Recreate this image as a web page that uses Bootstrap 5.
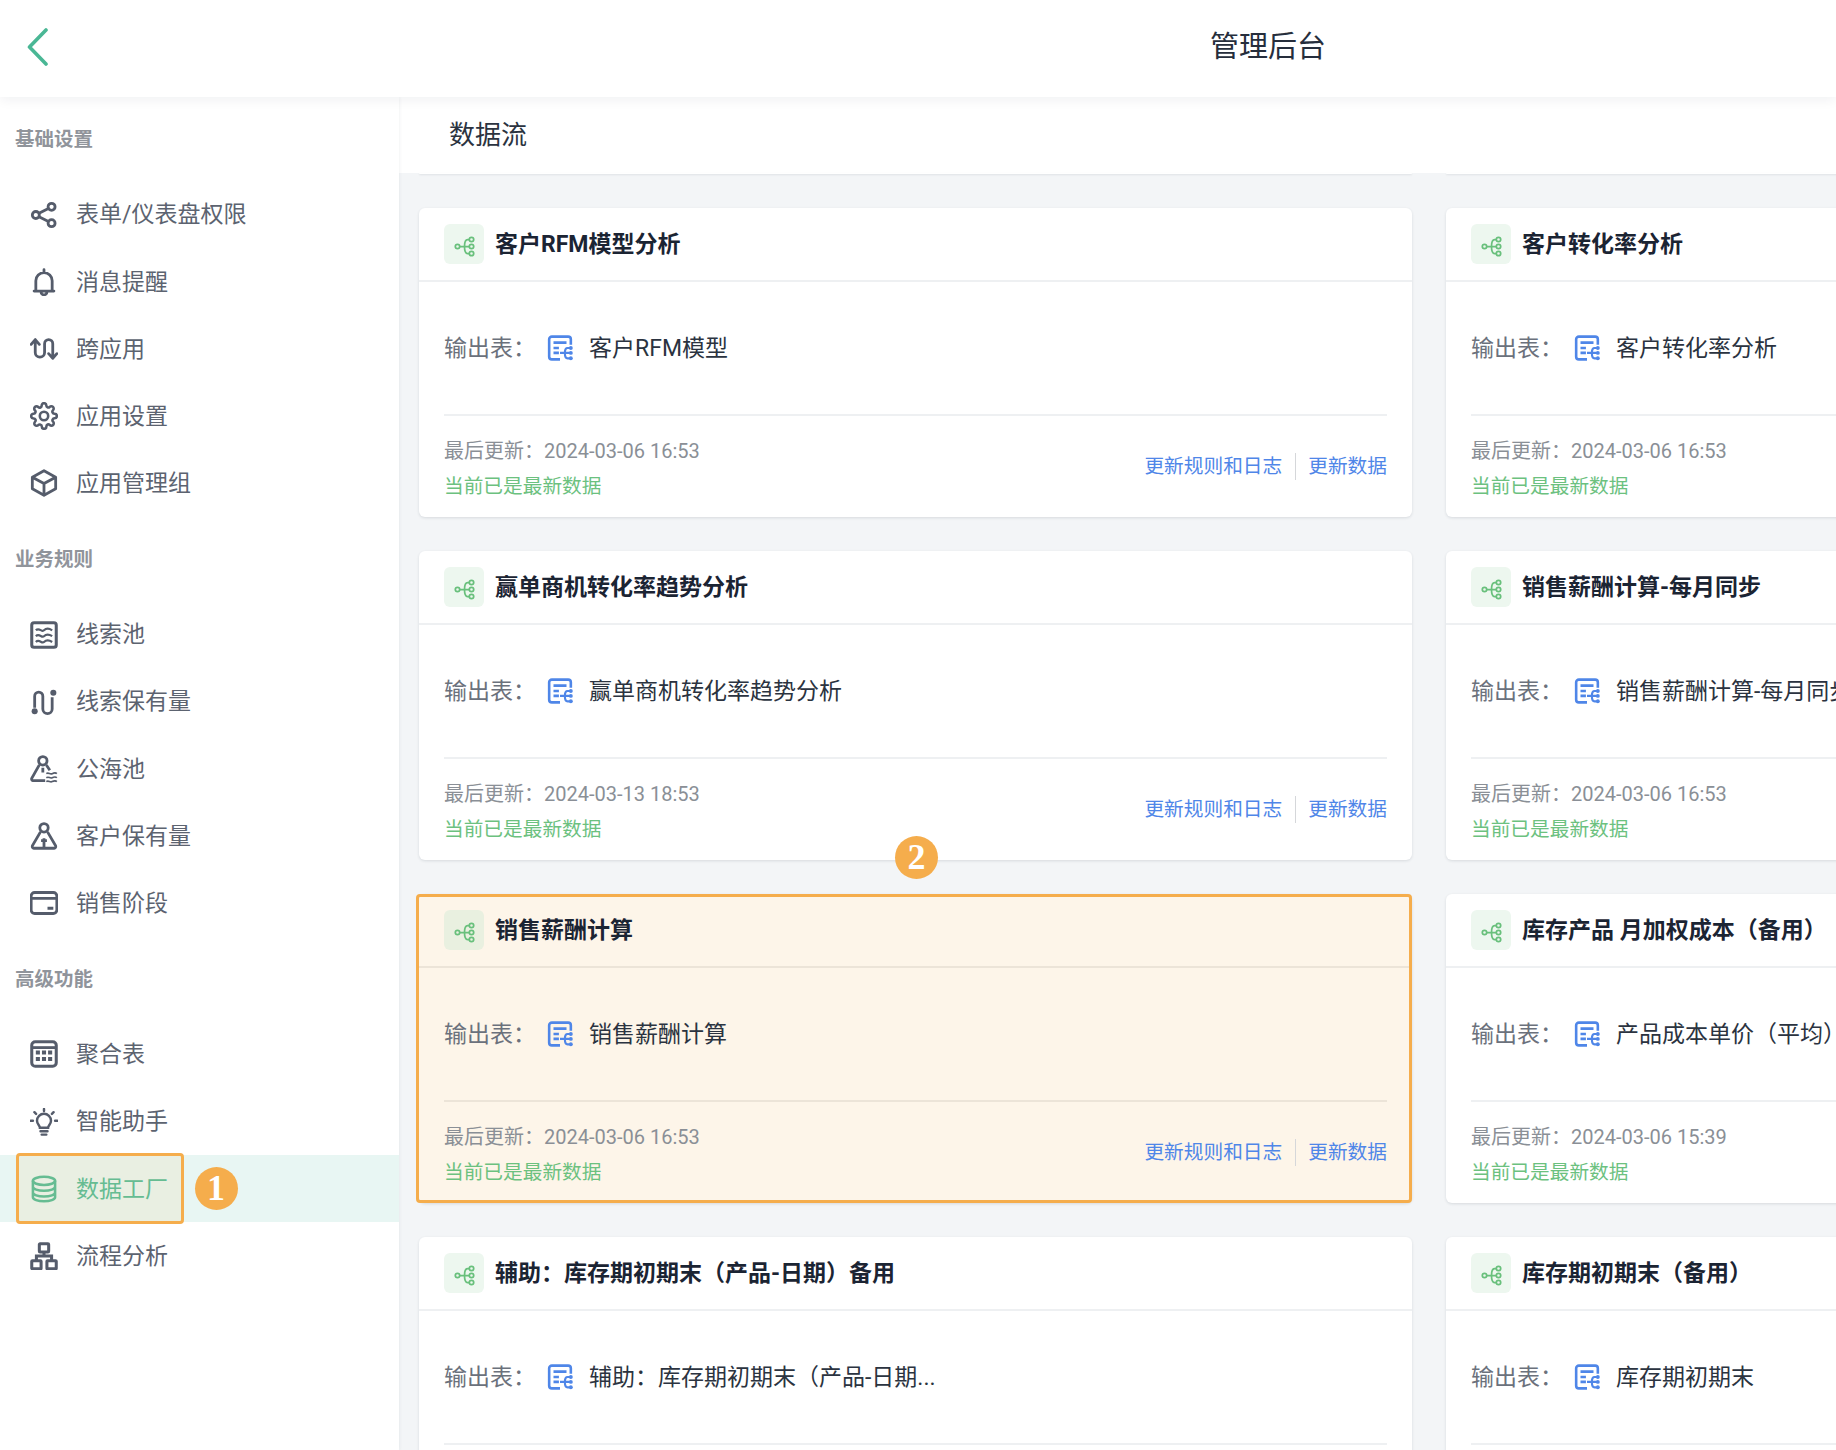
<!DOCTYPE html>
<html lang="zh-CN">
<head>
<meta charset="utf-8">
<title>管理后台</title>
<link href="https://cdn.jsdelivr.net/npm/bootstrap@5.3.0/dist/css/bootstrap.min.css" rel="stylesheet">
<style>
html,body{height:100%;overflow:hidden}
body{font-family:"Roboto","Noto Sans CJK SC",sans-serif;background:#f3f5f7;color:#1d2533}
.app-head{height:97px;background:#fff;box-shadow:0 2px 12px rgba(20,30,50,.07);z-index:3;position:relative;padding:0 0 3px 27px}
.app-title{font-size:29px;margin-left:1161px;color:#262e3c;padding-top:2px}
.app-body{height:1353px}
.side{width:399px;flex:none;background:#fff;box-shadow:1px 0 3px rgba(20,30,50,.05);z-index:2;position:relative}
.side-sec{height:84px;padding:2px 0 0 15px;font-size:19.5px;font-weight:700;color:#90949b}
.side-item{height:67.2px;padding-left:30px;font-size:23px;color:#5c6370;position:relative}
.side-item span{padding-top:2px}
.side-item svg{width:28px;height:28px;margin-right:18px;flex:none;color:#555c6b}
.side-item.on{background:#e8f6f3;color:#66bc92}
.side-item.on svg{color:#66bc92}
.side-item.on::before{content:"";position:absolute;left:16px;top:-2px;width:168px;height:71px;border:3px solid #f5ad4c;border-radius:4px;background:rgba(245,173,76,.1)}
.side-item.on>span,.side-item.on>svg{position:relative}
.num-dot{position:absolute;width:43px;height:43px;border-radius:50%;background:#f5ad4c;color:#fff;font-family:"Liberation Serif",serif;font-size:36px;font-weight:700;line-height:43px;text-align:center;z-index:4}
.dot-a{left:194.500px;top:11.500px}
.dot-b{left:476px;top:-58px}
.main-wrap{flex:1;min-width:0;overflow:hidden}
.sub-head{height:76px;background:#fff;padding-left:50px;font-size:26px;color:#2b3340}
.tail-row,.grid-cards{display:grid;grid-template-columns:993px 993px;column-gap:34px;padding-left:20px;width:2100px}
.tail-row{margin-bottom:34px}
.tail-row>div{height:1px;background:#fff;box-shadow:0 1px 2px rgba(20,30,50,.12)}
.grid-cards{row-gap:34px}
.flow-card{height:309px;background:#fff;border:0;border-radius:6px;box-shadow:0 1px 3px rgba(20,30,50,.12);position:relative}
.flow-card.sel{background:#fdf5e9}
.flow-card.sel::after{content:"";position:absolute;left:-3px;right:0;top:0;bottom:0;border:3px solid #f5ad4c;border-radius:4px;pointer-events:none}
.flow-head{height:74px;padding:0 25px;border-bottom:2px solid #eef0f2}
.sel .flow-head{border-bottom-color:#ece4d8}
.flow-ico{width:40px;height:40px;border-radius:6px;background:#edf7ef;color:#69c07c;margin-right:11px;flex:none;padding-top:5px}
.flow-ico svg{width:21px;height:21px}
.sel .flow-ico{background:#e9f0e0}
.flow-title{font-size:23px;font-weight:700;color:#1b2433;white-space:nowrap;padding-top:2px}
.flow-body{height:134px;margin:0 25px;border-bottom:2px solid #eef0f2;font-size:23px;white-space:nowrap}
.sel .flow-body{border-bottom-color:#ece4d8}
.out-label{width:92px;color:#6b717c;margin-right:11px;padding-top:2px}
.out-ico{width:26px;height:26px;color:#4f86e8;margin-right:16px;flex:none}
.out-val{color:#2b3340;padding-top:2px}
.flow-foot{height:101px;padding:0 25px;font-size:20px}
.foot-date{color:#8a8f96;line-height:35px}
.foot-ok{color:#6cc17f;line-height:35px;font-size:19.700px}
.foot-info{margin-top:4px}
.foot-link{color:#4f86e8;white-space:nowrap;font-size:19.700px}
.foot-sep{width:1px;height:27px;background:#d5d7da;margin:0 12.500px}
</style>
</head>
<body>
<svg width="0" height="0" class="d-block" aria-hidden="true">
<defs>
<symbol id="i-share" viewBox="0 0 24 24"><g fill="none" stroke="currentColor" stroke-width="2.400"><circle cx="5" cy="12" r="3"/><circle cx="18.500" cy="5" r="3"/><circle cx="18.500" cy="19" r="3"/><path d="M7.700 10.600 15.800 6.400M7.700 13.400l8.100 4.200"/></g></symbol>
<symbol id="i-bell" viewBox="0 0 24 24"><path d="M12 1.500v2M5 19.500V11a7 7 0 0 1 14 0v8.500M3.500 19.800h17M9.500 20.500a2.500 2.500 0 0 0 5 0" fill="none" stroke="currentColor" stroke-width="2.400" stroke-linecap="round"/></symbol>
<symbol id="i-cross" viewBox="0 0 24 24"><path d="M1 8 4.500 4 8 8M4.500 4v11a4 4 0 0 0 8 0V7.500a3.500 3.500 0 0 1 7 0V20M16 16l3.500 4 3.500-4" fill="none" stroke="currentColor" stroke-width="2.400" stroke-linecap="round" stroke-linejoin="round"/></symbol>
<symbol id="i-gear" viewBox="0 0 24 24"><g fill="none" stroke="currentColor" stroke-width="2.200"><circle cx="12" cy="12" r="3.600"/><path d="M19.400 15a1.650 1.650 0 0 0 .33 1.820l.06.06a2 2 0 0 1 0 2.830 2 2 0 0 1-2.830 0l-.06-.06a1.650 1.650 0 0 0-1.820-.33 1.650 1.650 0 0 0-1 1.510V21a2 2 0 0 1-2 2 2 2 0 0 1-2-2v-.09A1.650 1.650 0 0 0 9 19.400a1.650 1.650 0 0 0-1.820.33l-.06.06a2 2 0 0 1-2.830 0 2 2 0 0 1 0-2.830l.06-.06a1.650 1.650 0 0 0 .33-1.820 1.650 1.650 0 0 0-1.510-1H3a2 2 0 0 1-2-2 2 2 0 0 1 2-2h.09A1.650 1.650 0 0 0 4.600 9a1.650 1.650 0 0 0-.33-1.820l-.06-.06a2 2 0 0 1 0-2.830 2 2 0 0 1 2.830 0l.06.06a1.650 1.650 0 0 0 1.820.33H9a1.650 1.650 0 0 0 1-1.510V3a2 2 0 0 1 2-2 2 2 0 0 1 2 2v.09a1.650 1.650 0 0 0 1 1.510 1.650 1.650 0 0 0 1.820-.33l.06-.06a2 2 0 0 1 2.830 0 2 2 0 0 1 0 2.830l-.06.06a1.650 1.650 0 0 0-.33 1.820V9a1.650 1.650 0 0 0 1.510 1H21a2 2 0 0 1 2 2 2 2 0 0 1-2 2h-.09a1.650 1.650 0 0 0-1.510 1z"/></g></symbol>
<symbol id="i-cube" viewBox="0 0 24 24"><path d="M12 1.500 22 7v10l-10 5.500L2 17V7zM2 7l10 5.500L22 7M12 12.500v10" fill="none" stroke="currentColor" stroke-width="2.400" stroke-linejoin="round"/></symbol>
<symbol id="i-waves" viewBox="0 0 24 24"><rect x="1.500" y="1.500" width="21" height="21" rx="2" fill="none" stroke="currentColor" stroke-width="2.600"/><path d="M5 8c3-3 5 2 7 0s4-2 7 0M5 13c3-3 5 2 7 0s4-2 7 0M5 18c3-3 5 2 7 0s4-2 7 0" fill="none" stroke="currentColor" stroke-width="1.900"/></symbol>
<symbol id="i-road" viewBox="0 0 24 24"><path d="M4 17V7a3.500 3.500 0 0 1 7 0v11a4 4 0 0 0 8 0V8" fill="none" stroke="currentColor" stroke-width="2.400"/><circle cx="4" cy="20" r="2.600" fill="currentColor"/><circle cx="20" cy="4" r="2.600" fill="currentColor"/></symbol>
<symbol id="i-sea" viewBox="0 0 24 24"><g fill="none" stroke="currentColor" stroke-width="2.400"><circle cx="11" cy="5" r="3.600"/><path d="M8 8.500 1.500 20a1.500 1.500 0 0 0 1 2H13M14 8.500l3 4.500M11 15v-4"/></g><path d="M14 16c2-1.500 3 1 5 0s3-1 4 0M14 19.500c2-1.500 3 1 5 0s3-1 4 0M14 22.800c2-1.500 3 1 5 0s3-1 4 0" fill="none" stroke="currentColor" stroke-width="1.400"/></symbol>
<symbol id="i-person" viewBox="0 0 24 24"><g fill="none" stroke="currentColor" stroke-width="2.400"><circle cx="12" cy="5" r="3.600"/><path d="M9 8.500 2 20.500a1.500 1.500 0 0 0 1.300 2h17.400a1.500 1.500 0 0 0 1.300-2L15 8.500M12 22v-8M9.500 16h5"/></g></symbol>
<symbol id="i-card" viewBox="0 0 24 24"><rect x="1" y="3" width="22" height="18" rx="3" fill="none" stroke="currentColor" stroke-width="2.400"/><path d="M1 8h22M15 16.500h5" stroke="currentColor" stroke-width="2.400"/></symbol>
<symbol id="i-cal" viewBox="0 0 24 24"><rect x="1.500" y="1.500" width="21" height="21" rx="3" fill="none" stroke="currentColor" stroke-width="2.600"/><path d="M2 6.500h20" stroke="currentColor" stroke-width="2.400"/><path d="M5 9h3.500v3.500H5zM10.250 9h3.500v3.500h-3.500zM15.500 9H19v3.500h-3.500zM5 14.500h3.500V18H5zM10.250 14.500h3.500V18h-3.500zM15.500 14.500H19V18h-3.500z" fill="currentColor"/></symbol>
<symbol id="i-bulb" viewBox="0 0 24 24"><g fill="none" stroke="currentColor" stroke-width="2.100" stroke-linecap="round"><path d="M8.500 17c0-2-2.500-3-2.500-6a6 6 0 0 1 12 0c0 3-2.500 4-2.500 6zM9 20h6M10 22.800h4M12 .8v1.700M3.800 3.600l1.400 1.400M20.200 3.600l-1.400 1.400M.5 11h2M21.500 11h2"/></g></symbol>
<symbol id="i-db" viewBox="0 0 24 24"><g fill="none" stroke="currentColor" stroke-width="2.200"><ellipse cx="12" cy="5" rx="9.500" ry="3.500"/><path d="M2.500 5v14c0 2 4.200 3.500 9.500 3.500s9.500-1.500 9.500-3.500V5M2.500 10c0 2 4.200 3.500 9.500 3.500s9.500-1.500 9.500-3.500M2.500 15c0 2 4.200 3.500 9.500 3.500s9.500-1.500 9.500-3.500"/></g></symbol>
<symbol id="i-org" viewBox="0 0 24 24"><g fill="none" stroke="currentColor" stroke-width="2.600"><rect x="8" y="1.500" width="8" height="7" rx=".6"/><rect x="1.500" y="16" width="8" height="7" rx=".6"/><rect x="14.500" y="16" width="8" height="7" rx=".6"/><path d="M5.500 16v-4h13v4M12 8.500V12"/></g></symbol>
<symbol id="i-flow" viewBox="0 0 24 24"><g fill="none" stroke="currentColor" stroke-width="2"><circle cx="4" cy="12" r="2.500"/><circle cx="20" cy="4" r="2.500"/><circle cx="20" cy="12" r="2.500"/><circle cx="20" cy="20" r="2.500"/><path d="M6.500 12h11M17.500 4h-2c-3 0-3.500 3-3.500 8s.5 8 3.500 8h2"/></g></symbol>
<symbol id="i-out" viewBox="0 0 24 24"><g fill="none" stroke="currentColor" stroke-width="2.400"><path d="M22 9V4a2.500 2.500 0 0 0-2.500-2.500h-15A2.500 2.500 0 0 0 2 4v16a2.500 2.500 0 0 0 2.500 2.500H12M6 7h12M6 12h5M6 16.500h5"/><path d="M12 16.500h9M21 12h-2c-2 0-2.500 1.500-2.500 4.500s.5 5 2.500 5h2" stroke-width="2"/></g><circle cx="22" cy="12" r="1.800" fill="currentColor"/><circle cx="22" cy="16.500" r="1.800" fill="currentColor"/><circle cx="22" cy="21.500" r="1.800" fill="currentColor"/></symbol>
</defs>
</svg>

<header class="app-head d-flex align-items-center">
  <svg width="22" height="38" viewBox="0 0 22 38" fill="none" stroke="#4ab795" stroke-width="3.600" stroke-linecap="round" stroke-linejoin="round"><path d="M19 2 2.500 19 19 36"/></svg>
  <div class="app-title">管理后台</div>
</header>

<div class="app-body d-flex">
  <aside class="side">
    <div class="side-sec d-flex align-items-center">基础设置</div>
    <div class="side-item d-flex align-items-center"><svg><use href="#i-share"/></svg><span>表单/仪表盘权限</span></div>
    <div class="side-item d-flex align-items-center"><svg><use href="#i-bell"/></svg><span>消息提醒</span></div>
    <div class="side-item d-flex align-items-center"><svg><use href="#i-cross"/></svg><span>跨应用</span></div>
    <div class="side-item d-flex align-items-center"><svg><use href="#i-gear"/></svg><span>应用设置</span></div>
    <div class="side-item d-flex align-items-center"><svg><use href="#i-cube"/></svg><span>应用管理组</span></div>
    <div class="side-sec d-flex align-items-center">业务规则</div>
    <div class="side-item d-flex align-items-center"><svg><use href="#i-waves"/></svg><span>线索池</span></div>
    <div class="side-item d-flex align-items-center"><svg><use href="#i-road"/></svg><span>线索保有量</span></div>
    <div class="side-item d-flex align-items-center"><svg><use href="#i-sea"/></svg><span>公海池</span></div>
    <div class="side-item d-flex align-items-center"><svg><use href="#i-person"/></svg><span>客户保有量</span></div>
    <div class="side-item d-flex align-items-center"><svg><use href="#i-card"/></svg><span>销售阶段</span></div>
    <div class="side-sec d-flex align-items-center">高级功能</div>
    <div class="side-item d-flex align-items-center"><svg><use href="#i-cal"/></svg><span>聚合表</span></div>
    <div class="side-item d-flex align-items-center"><svg><use href="#i-bulb"/></svg><span>智能助手</span></div>
    <div class="side-item on d-flex align-items-center"><svg><use href="#i-db"/></svg><span>数据工厂</span><div class="num-dot dot-a">1</div></div>
    <div class="side-item d-flex align-items-center"><svg><use href="#i-org"/></svg><span>流程分析</span></div>
  </aside>

  <main class="main-wrap">
    <div class="sub-head d-flex align-items-center">数据流</div>
    <div class="tail-row"><div class="rounded-bottom"></div><div class="rounded-bottom"></div></div>
    <div class="grid-cards">
      <div class="flow-card">
        <div class="flow-head d-flex align-items-center"><div class="flow-ico d-flex align-items-center justify-content-center"><svg><use href="#i-flow"/></svg></div><div class="flow-title">客户RFM模型分析</div></div>
        <div class="flow-body d-flex align-items-center"><span class="out-label">输出表：</span><svg class="out-ico"><use href="#i-out"/></svg><span class="out-val">客户RFM模型</span></div>
        <div class="flow-foot d-flex align-items-center justify-content-between"><div class="foot-info"><div class="foot-date">最后更新：2024-03-06 16:53</div><div class="foot-ok">当前已是最新数据</div></div><div class="d-flex align-items-center"><span class="foot-link">更新规则和日志</span><span class="foot-sep"></span><span class="foot-link">更新数据</span></div></div>
      </div>
      <div class="flow-card">
        <div class="flow-head d-flex align-items-center"><div class="flow-ico d-flex align-items-center justify-content-center"><svg><use href="#i-flow"/></svg></div><div class="flow-title">客户转化率分析</div></div>
        <div class="flow-body d-flex align-items-center"><span class="out-label">输出表：</span><svg class="out-ico"><use href="#i-out"/></svg><span class="out-val">客户转化率分析</span></div>
        <div class="flow-foot d-flex align-items-center justify-content-between"><div class="foot-info"><div class="foot-date">最后更新：2024-03-06 16:53</div><div class="foot-ok">当前已是最新数据</div></div><div class="d-flex align-items-center"><span class="foot-link">更新规则和日志</span><span class="foot-sep"></span><span class="foot-link">更新数据</span></div></div>
      </div>
      <div class="flow-card">
        <div class="flow-head d-flex align-items-center"><div class="flow-ico d-flex align-items-center justify-content-center"><svg><use href="#i-flow"/></svg></div><div class="flow-title">赢单商机转化率趋势分析</div></div>
        <div class="flow-body d-flex align-items-center"><span class="out-label">输出表：</span><svg class="out-ico"><use href="#i-out"/></svg><span class="out-val">赢单商机转化率趋势分析</span></div>
        <div class="flow-foot d-flex align-items-center justify-content-between"><div class="foot-info"><div class="foot-date">最后更新：2024-03-13 18:53</div><div class="foot-ok">当前已是最新数据</div></div><div class="d-flex align-items-center"><span class="foot-link">更新规则和日志</span><span class="foot-sep"></span><span class="foot-link">更新数据</span></div></div>
      </div>
      <div class="flow-card">
        <div class="flow-head d-flex align-items-center"><div class="flow-ico d-flex align-items-center justify-content-center"><svg><use href="#i-flow"/></svg></div><div class="flow-title">销售薪酬计算-每月同步</div></div>
        <div class="flow-body d-flex align-items-center"><span class="out-label">输出表：</span><svg class="out-ico"><use href="#i-out"/></svg><span class="out-val">销售薪酬计算-每月同步</span></div>
        <div class="flow-foot d-flex align-items-center justify-content-between"><div class="foot-info"><div class="foot-date">最后更新：2024-03-06 16:53</div><div class="foot-ok">当前已是最新数据</div></div><div class="d-flex align-items-center"><span class="foot-link">更新规则和日志</span><span class="foot-sep"></span><span class="foot-link">更新数据</span></div></div>
      </div>
      <div class="flow-card sel">
        <div class="num-dot dot-b">2</div>
        <div class="flow-head d-flex align-items-center"><div class="flow-ico d-flex align-items-center justify-content-center"><svg><use href="#i-flow"/></svg></div><div class="flow-title">销售薪酬计算</div></div>
        <div class="flow-body d-flex align-items-center"><span class="out-label">输出表：</span><svg class="out-ico"><use href="#i-out"/></svg><span class="out-val">销售薪酬计算</span></div>
        <div class="flow-foot d-flex align-items-center justify-content-between"><div class="foot-info"><div class="foot-date">最后更新：2024-03-06 16:53</div><div class="foot-ok">当前已是最新数据</div></div><div class="d-flex align-items-center"><span class="foot-link">更新规则和日志</span><span class="foot-sep"></span><span class="foot-link">更新数据</span></div></div>
      </div>
      <div class="flow-card">
        <div class="flow-head d-flex align-items-center"><div class="flow-ico d-flex align-items-center justify-content-center"><svg><use href="#i-flow"/></svg></div><div class="flow-title">库存产品 月加权成本（备用）</div></div>
        <div class="flow-body d-flex align-items-center"><span class="out-label">输出表：</span><svg class="out-ico"><use href="#i-out"/></svg><span class="out-val">产品成本单价（平均）</span></div>
        <div class="flow-foot d-flex align-items-center justify-content-between"><div class="foot-info"><div class="foot-date">最后更新：2024-03-06 15:39</div><div class="foot-ok">当前已是最新数据</div></div><div class="d-flex align-items-center"><span class="foot-link">更新规则和日志</span><span class="foot-sep"></span><span class="foot-link">更新数据</span></div></div>
      </div>
      <div class="flow-card">
        <div class="flow-head d-flex align-items-center"><div class="flow-ico d-flex align-items-center justify-content-center"><svg><use href="#i-flow"/></svg></div><div class="flow-title">辅助：库存期初期末（产品-日期）备用</div></div>
        <div class="flow-body d-flex align-items-center"><span class="out-label">输出表：</span><svg class="out-ico"><use href="#i-out"/></svg><span class="out-val">辅助：库存期初期末（产品-日期...</span></div>
      </div>
      <div class="flow-card">
        <div class="flow-head d-flex align-items-center"><div class="flow-ico d-flex align-items-center justify-content-center"><svg><use href="#i-flow"/></svg></div><div class="flow-title">库存期初期末（备用）</div></div>
        <div class="flow-body d-flex align-items-center"><span class="out-label">输出表：</span><svg class="out-ico"><use href="#i-out"/></svg><span class="out-val">库存期初期末</span></div>
      </div>
    </div>
  </main>
</div>
<script src="https://cdn.jsdelivr.net/npm/bootstrap@5.3.0/dist/js/bootstrap.bundle.min.js"></script>
</body>
</html>
